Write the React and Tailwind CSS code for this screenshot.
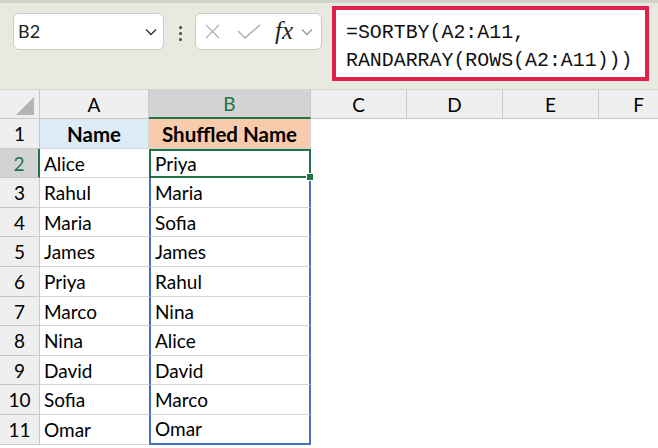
import React from "react";

const rows = [
  ["Alice", "Priya"],
  ["Rahul", "Maria"],
  ["Maria", "Sofia"],
  ["James", "James"],
  ["Priya", "Rahul"],
  ["Marco", "Nina"],
  ["Nina", "Alice"],
  ["David", "David"],
  ["Sofia", "Marco"],
  ["Omar", "Omar"],
];

const Chevron = ({ className }) => (
  <svg viewBox="0 0 12 8" className={className} fill="none" stroke="currentColor" strokeWidth="1.4">
    <path d="M1 1.5 L6 6.5 L11 1.5" />
  </svg>
);

const App = () => {
  return (
    <div className="w-[658px] h-[448px] overflow-hidden bg-white font-['Lato',sans-serif] text-black">
      {/* Toolbar */}
      <div className="h-[90px] bg-[#e9eadf] border-t-[3px] border-[#d2d3c8] border-b border-b-[#d6d7cc] flex items-start">
        <div className="ml-[13px] mt-[10px] w-[151px] h-[37px] rounded-md border border-[#cbccc6] bg-white flex items-center justify-between pl-[4px] pr-[6px]">
          <span className="text-[18px] text-[#222]">B2</span>
          <Chevron className="w-[12px] h-[8px] text-[#333]" />
        </div>
        <div className="mt-[23px] ml-[15px] flex flex-col gap-[3px]">
          <span className="w-[3px] h-[3px] bg-[#444] rounded-full" />
          <span className="w-[3px] h-[3px] bg-[#444] rounded-full" />
          <span className="w-[3px] h-[3px] bg-[#444] rounded-full" />
        </div>
        <div className="ml-[13px] mt-[10px] w-[127px] h-[37px] rounded-md border border-[#cbccc6] bg-white flex items-center pl-[9px] pr-[4px]">
          <svg viewBox="0 0 16 16" className="w-[15px] h-[15px] text-[#a8a8a8]" fill="none" stroke="currentColor" strokeWidth="1.3">
            <path d="M1 1 L15 15 M15 1 L1 15" />
          </svg>
          <svg viewBox="0 0 24 16" className="ml-[17px] w-[24px] h-[16px] text-[#a8a8a8]" fill="none" stroke="currentColor" strokeWidth="1.3">
            <path d="M1 7 L8 14 L23 1" />
          </svg>
          <span className="ml-[14px] font-['Liberation_Serif',serif] italic text-[25px] leading-none text-[#222] -mt-[2px]">fx</span>
          <Chevron className="ml-[8px] w-[12px] h-[8px] text-[#999]" />
        </div>
        <div className="ml-[10px] mt-[3px] w-[317px] h-[75px] border-4 border-[#e31f4b] bg-white pl-[10px] pt-[9px] font-['Liberation_Mono',monospace] text-[19.9px] leading-[28px] text-[#111]">
          <div>=SORTBY(A2:A11,</div>
          <div>RANDARRAY(ROWS(A2:A11)))</div>
        </div>
      </div>

      {/* Column headers */}
      <div className="flex h-[29px] bg-[#efefef] text-[19px]">
        <div className="w-[40px] border-r border-[#c8c8c8] border-b flex items-end justify-end pr-[5px] pb-[3px]">
          <svg viewBox="0 0 16 16" className="w-[18px] h-[18px]">
            <path d="M16 0 L16 16 L0 16 Z" fill="#b4b4b4" />
          </svg>
        </div>
        <div className="w-[109px] border-r border-b border-[#c8c8c8] flex items-center justify-center pt-[2px]">A</div>
        <div className="w-[162px] bg-[#d3d3d3] border-r border-[#c8c8c8] border-b-2 border-b-[#217346] text-[#217346] flex items-center justify-center pt-[2px]">B</div>
        <div className="w-[96px] border-r border-b border-[#c8c8c8] flex items-center justify-center pt-[2px]">C</div>
        <div className="w-[96px] border-r border-b border-[#c8c8c8] flex items-center justify-center pt-[2px]">D</div>
        <div className="w-[96px] border-r border-b border-[#c8c8c8] flex items-center justify-center pt-[2px]">E</div>
        <div className="flex-1 border-b border-[#c8c8c8] flex items-center justify-center pl-[20px] pt-[2px]">F</div>
      </div>

      {/* Row 1 */}
      <div className="flex h-[29.6px] text-[19px]">
        <div className="w-[40px] bg-[#efefef] border-r border-b border-[#c8c8c8] flex items-center justify-center pt-[2px]">1</div>
        <div className="w-[109px] bg-[#ddebf7] border-r border-b border-[#d4d4d4] font-bold text-[20.5px] flex items-center justify-center pt-[2px]">Name</div>
        <div className="w-[162px] bg-[#f8cbad] border-r border-b border-[#d4d4d4] font-bold text-[20.5px] flex items-center justify-center pt-[2px]">Shuffled Name</div>
      </div>

      {rows.map(([a, b], i) => {
        const n = i + 2;
        const first = n === 2;
        const last = n === 11;
        return (
          <div key={n} className="flex h-[29.6px] text-[19px]">
            <div
              className={
                first
                  ? "w-[40px] bg-[#d3d3d3] border-r-2 border-[#217346] border-b border-b-[#c8c8c8] text-[#217346] flex items-center justify-center pt-[2px]"
                  : "w-[40px] bg-[#efefef] border-r border-b border-[#c8c8c8] flex items-center justify-center pt-[2px]"
              }
            >
              {n}
            </div>
            <div className="w-[109px] border-b border-[#d4d4d4] pl-[4px] flex items-center pt-[2px]">{a}</div>
            {first ? (
              <div className="relative w-[162px] border-2 border-[#217346] pl-[4px] flex items-center pt-[1px]">
                {b}
                <span className="absolute -right-[5px] -bottom-[5px] w-[8px] h-[8px] bg-[#217346] border border-white" />
              </div>
            ) : (
              <div
                className={
                  last
                    ? "w-[162px] border-x-2 border-b-2 border-[#4472c4] pl-[4px] flex items-center pt-[2px]"
                    : "w-[162px] border-x-2 border-[#4472c4] border-b border-b-[#d4d4d4] pl-[4px] flex items-center pt-[2px]"
                }
              >
                {b}
              </div>
            )}
          </div>
        );
      })}
    </div>
  );
};

export default App;
